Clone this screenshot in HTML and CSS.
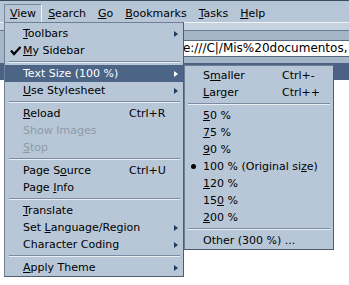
FILE: index.html
```html
<!DOCTYPE html>
<html lang="en">
<head>
    <meta charset="UTF-8">
    <title>View menu</title>
    <link rel="stylesheet" href="styles.css">
</head>
<body>
    <div class="window">
        <div class="menubar">
            <span class="mitem open"><u>V</u>iew</span>
            <span class="mitem"><u>S</u>earch</span>
            <span class="mitem"><u>G</u>o</span>
            <span class="mitem"><u>B</u>ookmarks</span>
            <span class="mitem"><u>T</u>asks</span>
            <span class="mitem"><u>H</u>elp</span>
        </div>
        <div class="toolbar"></div>
        <div class="navbar">
            <div class="urlbox">file:///C|/Mis%20documentos,</div>
        </div>
        <div class="tabbar"></div>
        <div class="content"></div>

        <!-- menu View -->
        <div class="menu main">
            <div class="item"><span></span><span class="label"><u>T</u>oolbars</span><span></span><span class="arrow"></span></div>
            <div class="item"><span class="mark"><svg width="12" height="10" viewBox="0 0 12 10"><path d="M1 4.5 L4 8 L10.5 1" fill="none" stroke="#000" stroke-width="2.2"/></svg></span><span class="label"><u>M</u>y Sidebar</span></div>
            <div class="sep"></div>
            <div class="item active"><span></span><span class="label">Text Size (100 %)</span><span></span><span class="arrow"></span></div>
            <div class="item"><span></span><span class="label"><u>U</u>se Stylesheet</span><span></span><span class="arrow"></span></div>
            <div class="sep"></div>
            <div class="item"><span></span><span class="label"><u>R</u>eload</span><span class="key">Ctrl+R</span></div>
            <div class="item disabled"><span></span><span class="label">Show Ima<u>g</u>es</span></div>
            <div class="item disabled"><span></span><span class="label"><u>S</u>top</span></div>
            <div class="sep"></div>
            <div class="item"><span></span><span class="label">Page S<u>o</u>urce</span><span class="key">Ctrl+U</span></div>
            <div class="item"><span></span><span class="label">Page <u>I</u>nfo</span></div>
            <div class="sep"></div>
            <div class="item"><span></span><span class="label"><u>T</u>ranslate</span></div>
            <div class="item"><span></span><span class="label">Set <u>L</u>anguage/Region</span><span></span><span class="arrow"></span></div>
            <div class="item"><span></span><span class="label">Character Coding</span><span></span><span class="arrow"></span></div>
            <div class="sep"></div>
            <div class="item"><span></span><span class="label"><u>A</u>pply Theme</span><span></span><span class="arrow"></span></div>
        </div>

        <!-- submenu Text Size -->
        <div class="menu sub">
            <div class="item"><span></span><span class="label">S<u>m</u>aller</span><span class="key">Ctrl+-</span></div>
            <div class="item"><span></span><span class="label"><u>L</u>arger</span><span class="key">Ctrl++</span></div>
            <div class="sep"></div>
            <div class="item"><span></span><span class="label"><u>5</u>0 %</span></div>
            <div class="item"><span></span><span class="label"><u>7</u>5 %</span></div>
            <div class="item"><span></span><span class="label"><u>9</u>0 %</span></div>
            <div class="item"><span class="mark"><span class="dot"></span></span><span class="label">100 % (Original si<u>z</u>e)</span></div>
            <div class="item"><span></span><span class="label"><u>1</u>20 %</span></div>
            <div class="item"><span></span><span class="label">15<u>0</u> %</span></div>
            <div class="item"><span></span><span class="label"><u>2</u>00 %</span></div>
            <div class="sep"></div>
            <div class="item"><span></span><span class="label">Other (300 %) ...</span></div>
        </div>
    </div>
</body>
</html>
```

FILE: styles.css
```css
body {
    margin: 0;
    font-family: "DejaVu Sans", Verdana, sans-serif;
    font-size: 11px;
    color: #000;
    background: #fff;
}

.window {
    position: relative;
    width: 349px;
    height: 285px;
    overflow: hidden;
}

/* barra de menus */
.menubar {
    display: flex;
    height: 22px;
    box-sizing: border-box;
    padding: 3px 0 0 3px;
    border-top: 1px solid #3a4c62;
    background: #b7c6d6;
}

.mitem {
    border: 1px solid transparent;
    border-bottom: none;
    padding: 0 5px;
    line-height: 17px;
}

.mitem.open {
    border-color: #7a8a9e #eef3f8 transparent #7a8a9e;
    margin-left: 1px;
}

u {
    text-underline-offset: 1px;
}

/* barras del navegador detras del menu */
.toolbar {
    height: 7px;
    background: #c6d2de;
    border-top: 1px solid #eef3f8;
    border-bottom: 1px solid #6b7d93;
}

.navbar {
    height: 32px;
    box-sizing: border-box;
    padding-top: 9px;
    background: #a6b6c9;
}

.urlbox {
    margin-left: 162px;
    height: 17px;
    box-sizing: border-box;
    border: 1px solid #56687e;
    border-right: none;
    background: #fff;
    font-size: 12px;
    line-height: 15px;
    padding-left: 9px;
    white-space: nowrap;
    overflow: hidden;
}

.tabbar {
    height: 17px;
    background: #4b6284;
}

.content {
    height: 200px;
    background: #fff;
}

/* menus desplegables */
.menu {
    position: absolute;
    box-sizing: border-box;
    background: repeating-conic-gradient(#b3c3d3 0 25%, #bccbdb 0 50%) 0 0 / 2px 2px;
    border: 1px solid #4f5d6e;
    border-left-color: #6f7f94;
    border-top-color: #6f7f94;
}

.main {
    top: 22px;
    left: 4px;
    width: 180px;
    padding-top: 2px;
}

.sub {
    top: 65px;
    left: 184px;
    width: 150px;
    padding-top: 1px;
}

.item {
    display: grid;
    grid-template-columns: 18px minmax(0, 1fr) 45px 10px;
    height: 17px;
    line-height: 17px;
    white-space: nowrap;
}

.sub .item {
    grid-template-columns: 18px minmax(0, 1fr) 42px 10px;
}

.item .label {
    overflow: visible;
}

.item .key {
    padding-left: 1px;
}

.item.active {
    background: #4c6486;
    color: #fff;
}

.item.disabled {
    color: #8d9aa9;
}

.arrow {
    align-self: center;
    width: 0;
    height: 0;
    margin-left: 1px;
    border-left: 4px solid #1d3a60;
    border-top: 3.5px solid transparent;
    border-bottom: 3.5px solid transparent;
}

.item.active .arrow {
    border-left-color: #fff;
}

.mark {
    display: flex;
    align-items: center;
    padding-left: 5px;
}

.dot {
    width: 5px;
    height: 5px;
    margin-left: 1px;
    border-radius: 50%;
    background: #000;
}

.sep {
    height: 6px;
    padding-top: 2px;
    box-sizing: border-box;
}

.sep::before {
    content: "";
    display: block;
    margin: 0 3px 0 4px;
    border-top: 1px solid #7b8ca2;
    border-bottom: 1px solid #e9eff5;
}

.sub .sep::before {
    margin: 0 3px;
}
```
